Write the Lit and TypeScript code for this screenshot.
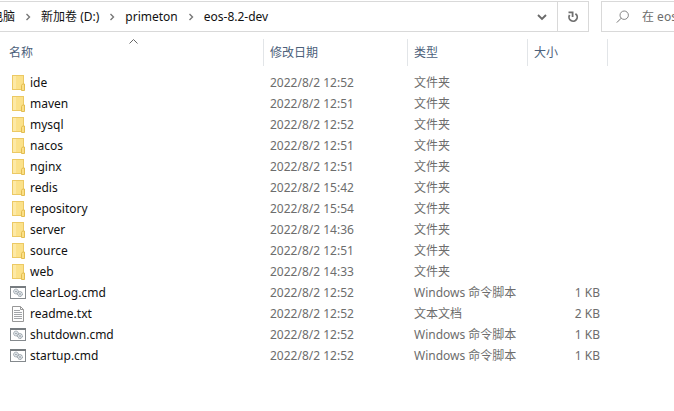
import { LitElement, html, css, svg } from "lit";
import { customElement, property } from "lit/decorators.js";

type Kind = "folder" | "cmd" | "txt";

interface Entry {
  name: string;
  date: string;
  kind: Kind;
  size?: string;
}

const TYPE_LABEL: Record<Kind, string> = {
  folder: "文件夹",
  cmd: "Windows 命令脚本",
  txt: "文本文档",
};

const ENTRIES: Entry[] = [
  { name: "ide", date: "2022/8/2 12:52", kind: "folder" },
  { name: "maven", date: "2022/8/2 12:51", kind: "folder" },
  { name: "mysql", date: "2022/8/2 12:52", kind: "folder" },
  { name: "nacos", date: "2022/8/2 12:51", kind: "folder" },
  { name: "nginx", date: "2022/8/2 12:51", kind: "folder" },
  { name: "redis", date: "2022/8/2 15:42", kind: "folder" },
  { name: "repository", date: "2022/8/2 15:54", kind: "folder" },
  { name: "server", date: "2022/8/2 14:36", kind: "folder" },
  { name: "source", date: "2022/8/2 12:51", kind: "folder" },
  { name: "web", date: "2022/8/2 14:33", kind: "folder" },
  { name: "clearLog.cmd", date: "2022/8/2 12:52", kind: "cmd", size: "1 KB" },
  { name: "readme.txt", date: "2022/8/2 12:52", kind: "txt", size: "2 KB" },
  { name: "shutdown.cmd", date: "2022/8/2 12:52", kind: "cmd", size: "1 KB" },
  { name: "startup.cmd", date: "2022/8/2 12:52", kind: "cmd", size: "1 KB" },
];

const PATH = ["电脑", "新加卷 (D:)", "primeton", "eos-8.2-dev"];

const folderArt = svg`
  <rect x="2.5" y="0.5" width="11" height="14" fill="#fbe18a" stroke="#ecc964"/>
  <path d="M3 1h3v13H3z" fill="#fde9a6"/>
  <path d="M11.5 15.5v-5l1-1.5h2v6.5z" fill="#fbdf86" stroke="#e3bd50"/>`;

const cmdArt = svg`
  <rect x="0.5" y="1.5" width="15" height="12" fill="#fff" stroke="#84898d"/>
  <path d="M0 2h16" stroke="#777c80" stroke-width="2"/>
  <circle cx="6" cy="6.5" r="2.4" fill="#e4e9ed" stroke="#8d969e" stroke-dasharray="1.4 0.5"/>
  <circle cx="6" cy="6.5" r="0.8" fill="#8d969e"/>
  <circle cx="10" cy="9" r="2.4" fill="#e4e9ed" stroke="#7d8790" stroke-dasharray="1.4 0.5"/>
  <circle cx="10" cy="9" r="0.8" fill="#7d8790"/>`;

const txtArt = svg`
  <path d="M2.5 0.5h8l3 3v12h-11z" fill="#fdfdfd" stroke="#989898"/>
  <path d="M10.5 0.5v3h3" fill="none" stroke="#989898"/>
  <path d="M4 4.5h6M4 6.5h8M4 8.5h8M4 10.5h8M4 12.5h8" stroke="#a2a5a8"/>`;

@customElement("file-icon")
export class FileIcon extends LitElement {
  @property() kind: Kind = "folder";

  static styles = css`
    :host { display: block; width: 16px; height: 16px; flex: none; }
    .art { display: block; }
  `;

  render() {
    const art = { folder: folderArt, cmd: cmdArt, txt: txtArt }[this.kind];
    return html`<svg class="art" width="16" height="16" viewBox="0 0 16 16" aria-hidden="true">${art}</svg>`;
  }
}

@customElement("address-bar")
export class AddressBar extends LitElement {
  static styles = css`
    :host { display: block; padding-top: 1px; }
    .bar { display: flex; gap: 12px; height: 31px; }
    .address {
      flex: 1; min-width: 0; box-sizing: border-box; display: flex;
      border: 1px solid #d9d9d9; border-left: 0;
    }
    .path { flex: 1; min-width: 0; overflow: hidden; display: flex; }
    .crumbs {
      display: flex; align-items: center; list-style: none;
      margin: 0 0 0 -9px; padding: 0; white-space: nowrap;
    }
    .crumb { display: flex; align-items: center; }
    .link { color: #111; text-decoration: none; }
    .sep { width: 26px; height: 10px; }
    .tool {
      font: inherit; background: none; border: 0; padding: 0; width: 30px;
      display: flex; align-items: center; justify-content: center;
    }
    .refresh { border-left: 1px solid #d9d9d9; width: 31px; }
    .search {
      flex: 0 0 73px; box-sizing: border-box; display: flex; align-items: center;
      gap: 12px; padding-left: 14px; border: 1px solid #d9d9d9; border-right: 0;
      overflow: hidden;
    }
    .glass { flex: none; }
    .field {
      font: inherit; color: #6d6d6d; border: 0; padding: 0; outline: 0;
      background: none; flex: 1; min-width: 0;
    }
    .field::placeholder { color: #6d6d6d; opacity: 1; }
  `;

  render() {
    return html`
      <div class="bar">
        <div class="address">
          <nav class="path" aria-label="路径">
            <ol class="crumbs">
              ${PATH.map((part, i) => html`
                <li class="crumb">
                  ${i ? html`<svg class="sep" viewBox="0 0 26 10" aria-hidden="true">
                    <path d="M11.5 2l3 3-3 3" fill="none" stroke="#777" stroke-width="1.4"/></svg>` : ""}
                  <a class="link" href="#">${part}</a>
                </li>`)}
            </ol>
          </nav>
          <button class="tool" aria-label="历史记录">
            <svg width="10" height="8" viewBox="0 0 10 8" aria-hidden="true">
              <path d="M1 2l4 4 4-4" fill="none" stroke="#6a6a6a" stroke-width="1.9"/>
            </svg>
          </button>
          <button class="tool refresh" aria-label="刷新">
            <svg width="12" height="12" viewBox="0 0 12 12" aria-hidden="true">
              <path d="M8.4 2.7A4.1 4.1 0 1 1 2.6 4" fill="none" stroke="#707070" stroke-width="1.8"/>
              <path d="M1.5 1.4H5.6V6" fill="none" stroke="#707070" stroke-width="1.8"/>
            </svg>
          </button>
        </div>
        <label class="search">
          <svg class="glass" width="14" height="14" viewBox="0 0 14 14" aria-hidden="true">
            <circle cx="8.2" cy="5.2" r="4.2" fill="none" stroke="#777" stroke-width="0.9"/>
            <path d="M5.2 8.2L0.8 12.6" stroke="#777"/>
          </svg>
          <input class="field" type="text" aria-label="搜索" placeholder="在 eos-8.2-dev 中搜索">
        </label>
      </div>`;
  }
}

@customElement("file-list")
export class FileList extends LitElement {
  static styles = css`
    :host { display: block; padding-top: 7px; }
    .list { width: 100%; table-layout: fixed; border-collapse: separate; border-spacing: 0; }
    .name { width: 264px; }
    .date { width: 144px; }
    .type { width: 120px; }
    .size { width: 80px; }
    .head {
      position: relative; box-sizing: border-box; height: 27px; padding: 0 0 0 6px;
      text-align: left; font-weight: 400; color: #4c607a;
      border-right: 1px solid #e2e5e8;
    }
    .head:first-child { padding-left: 9px; }
    .rest { border: 0; padding: 0; }
    .sort { position: absolute; top: 0; left: calc(50% - 3px); }
    .gap { height: 6px; padding: 0; }
    .cell {
      box-sizing: border-box; height: 21px; padding: 0 0 0 6px; color: #6d6d6d;
      white-space: nowrap; overflow: hidden;
    }
    .cell:first-child { padding-left: 10px; color: #111; }
    .number { text-align: right; padding-right: 8px; }
    .item { display: flex; align-items: center; gap: 4px; }
  `;

  render() {
    return html`
      <table class="list">
        <colgroup>
          <col class="name"><col class="date"><col class="type"><col class="size"><col>
        </colgroup>
        <thead>
          <tr>
            <th class="head" scope="col" aria-sort="ascending">名称
              <svg class="sort" width="9" height="5" viewBox="0 0 9 5" aria-hidden="true">
                <path d="M0.5 4.5l4-4 4 4" fill="none" stroke="#666"/>
              </svg>
            </th>
            <th class="head" scope="col">修改日期</th>
            <th class="head" scope="col">类型</th>
            <th class="head" scope="col">大小</th>
            <td class="rest"></td>
          </tr>
        </thead>
        <tbody>
          <tr><td class="gap" colspan="5"></td></tr>
          ${ENTRIES.map((e) => html`
            <tr>
              <td class="cell"><div class="item"><file-icon .kind=${e.kind}></file-icon><span>${e.name}</span></div></td>
              <td class="cell">${e.date}</td>
              <td class="cell">${TYPE_LABEL[e.kind]}</td>
              <td class="cell number">${e.size ?? ""}</td>
              <td class="rest"></td>
            </tr>`)}
        </tbody>
      </table>`;
  }
}

@customElement("app-root")
export class AppRoot extends LitElement {
  static styles = css`
    :host {
      display: block; min-height: 100vh; background: #fff;
      font: 12px/18px "Noto Sans", "Noto Sans CJK SC", sans-serif;
    }
  `;

  render() {
    return html`<address-bar></address-bar><file-list></file-list>`;
  }
}
